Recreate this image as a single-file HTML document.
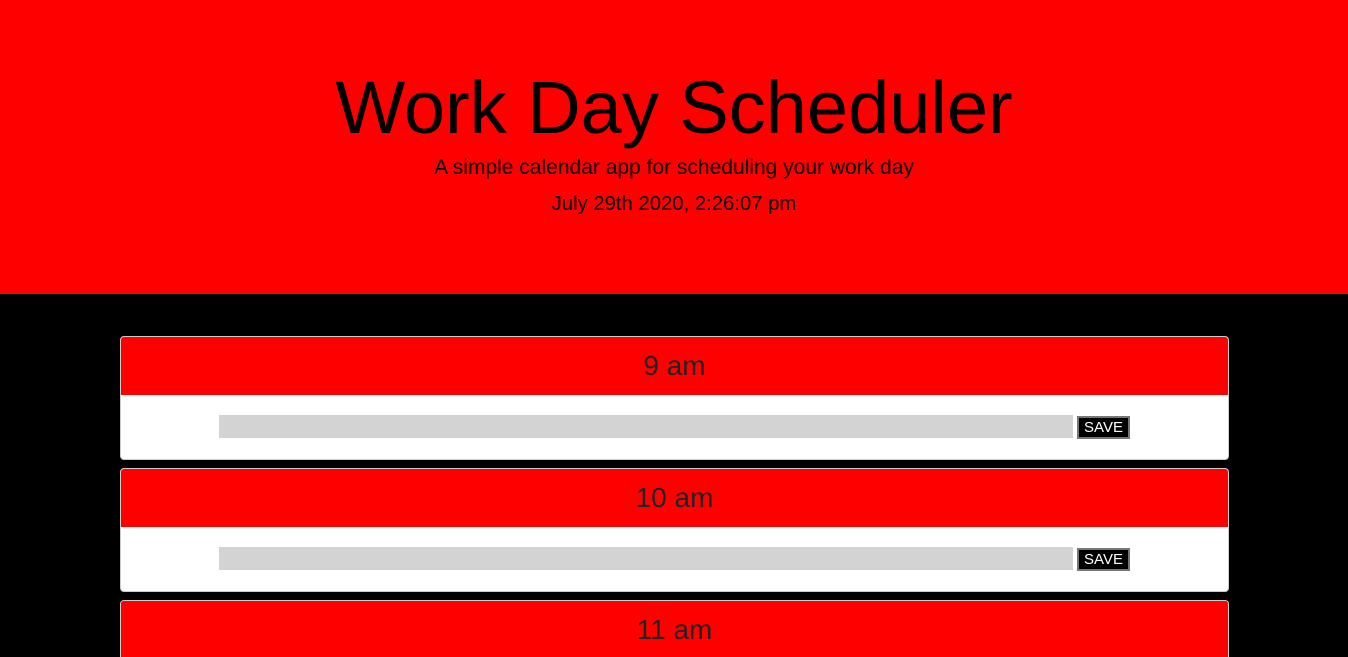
<!DOCTYPE html>
<html style="height:657px;overflow:hidden"><head><style>
body{margin:0;width:1348px;height:657px;overflow:hidden;background:#000;font-family:"Liberation Sans","DejaVu Sans",sans-serif;position:relative}
header{background:#f00;height:294px;text-align:center;color:#000;position:relative}
h1{position:absolute;left:0;right:0;top:66px;margin:0;font-size:74px;font-weight:normal;line-height:84px}
.sub{position:absolute;left:0;right:0;top:155px;font-size:21px;line-height:26px}
.date{position:absolute;left:0;right:0;top:191px;font-size:20.3px;line-height:26px}
.card{position:absolute;left:120px;width:1107px;height:122px;border:1px solid #ccc;border-radius:4px;background:#fff;overflow:hidden}
.hd{background:#f00;height:58px;text-align:center;font-size:28px;line-height:58px;color:#222}
.in{position:absolute;left:98px;top:78px;width:854px;height:23px;background:#d3d3d3}
.btn{position:absolute;left:956px;top:79px;width:49px;height:19px;background:#000;border:2px solid #777;color:#fff;font-size:15px;line-height:19px;text-align:center}
</style></head><body>
<header><h1>Work Day Scheduler</h1><div class="sub">A simple calendar app for scheduling your work day</div><div class="date">July 29th 2020, 2:26:07 pm</div></header>
<div class="card" style="top:336px"><div class="hd">9 am</div><div class="in"></div><div class="btn">SAVE</div></div>
<div class="card" style="top:468px"><div class="hd">10 am</div><div class="in"></div><div class="btn">SAVE</div></div>
<div class="card" style="top:600px;height:56px;border-bottom:none;border-radius:4px 4px 0 0"><div class="hd">11 am</div></div>
</body></html>
